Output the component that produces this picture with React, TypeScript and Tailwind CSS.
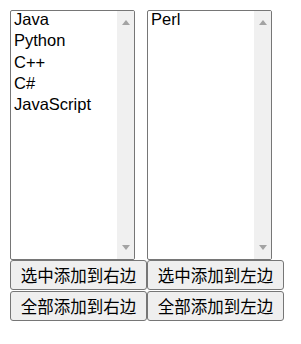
import React from "react";

const Up = () => (
  <svg width="8" height="5" viewBox="0 0 8 5">
    <polygon points="0,5 8,5 4,0" fill="#a3a3a3" />
  </svg>
);
const Down = () => (
  <svg width="8" height="5" viewBox="0 0 8 5">
    <polygon points="0,0 8,0 4,5" fill="#a3a3a3" />
  </svg>
);

function ListBox({ items }: { items: string[] }) {
  return (
    <div className="flex w-[125px] h-[250px] border border-[#767676] rounded-[2px] bg-white overflow-hidden">
      <div className="flex-1 pl-[3px] pt-0">
        {items.map((it) => (
          <div
            key={it}
            className="h-[21.25px] leading-[17px] text-[16.5px] text-black whitespace-nowrap"
            style={{ fontFamily: '"Liberation Sans", Arial, sans-serif' }}
          >
            {it}
          </div>
        ))}
      </div>
      <div className="w-[17px] bg-[#f0f0f0] flex flex-col justify-between items-center py-[9px]">
        <Up />
        <Down />
      </div>
    </div>
  );
}

function Btn({ children }: { children: React.ReactNode }) {
  return (
    <button
      className="w-[137px] h-[30px] border border-[#767676] rounded-[3px] bg-[#efefef] text-black text-[16.5px] leading-none flex items-center justify-center whitespace-nowrap"
      style={{ fontFamily: '"Noto Sans CJK SC", "Liberation Sans", sans-serif' }}
    >
      {children}
    </button>
  );
}

export default function App() {
  return (
    <div className="w-[301px] h-[344px] bg-white pl-[10px] pt-[10px] flex">
      <div className="flex flex-col w-[137px]">
        <ListBox items={["Java", "Python", "C++", "C#", "JavaScript"]} />
        <Btn>选中添加到右边</Btn>
        <div className="mt-[1px]">
          <Btn>全部添加到右边</Btn>
        </div>
      </div>
      <div className="flex flex-col w-[137px]">
        <ListBox items={["Perl"]} />
        <Btn>选中添加到左边</Btn>
        <div className="mt-[1px]">
          <Btn>全部添加到左边</Btn>
        </div>
      </div>
    </div>
  );
}
